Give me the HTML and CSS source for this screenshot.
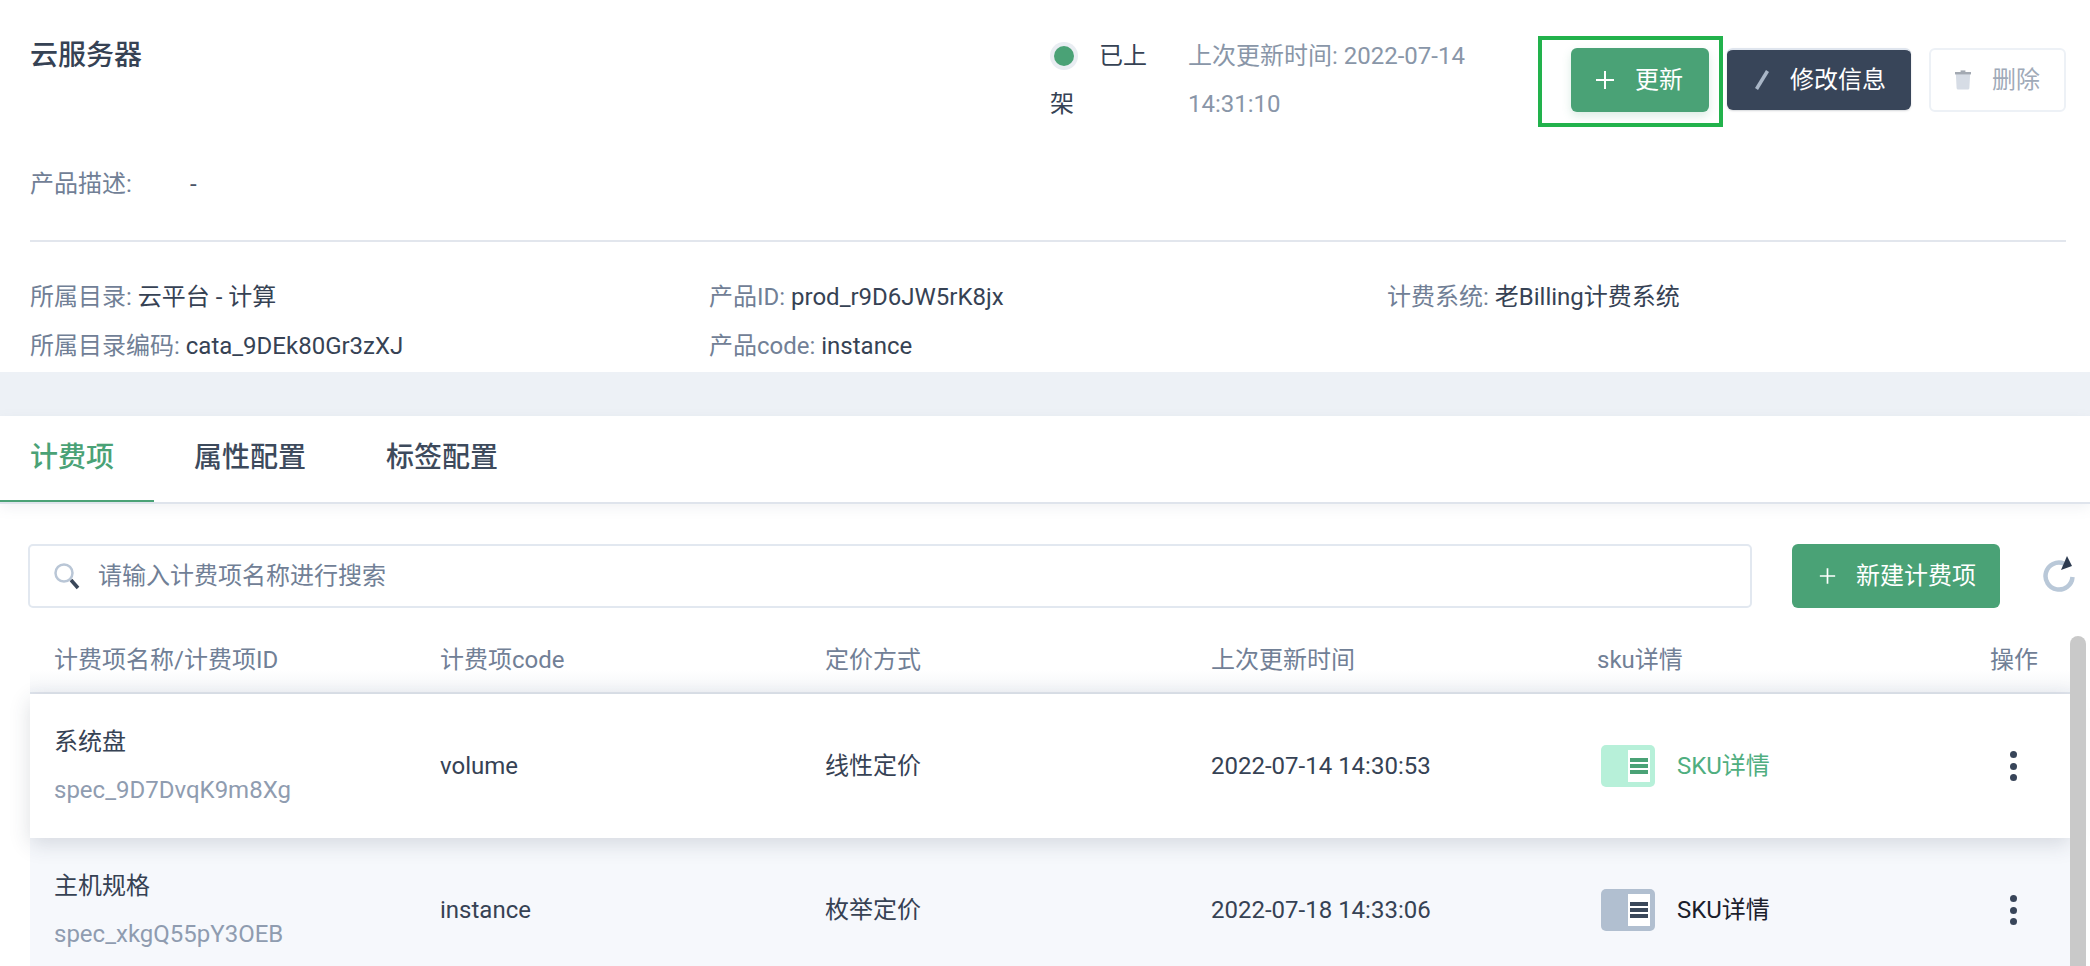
FILE: index.html

```html
<!doctype html>
<html lang="zh-CN">
  <head>
    <meta charset="utf-8">
    <title>云服务器</title>
    <link rel="stylesheet" href="styles.css">
  </head>
  <body>
    <section class="product">
      <div class="product-head">
        <h1 class="product-title">云服务器</h1>
        <div class="status"><span class="status-dot"></span>已上架</div>
        <div class="updated">上次更新时间: 2022-07-14 14:31:10</div>
        <div class="actions">
          <button class="btn btn-green btn-marked">
            <svg class="btn-icon" width="20" height="20" viewBox="0 0 20 20"><path d="M10 1v18M1 10h18" stroke="#fff" stroke-width="2" fill="none"/></svg>
            更新
            <span class="mark"></span>
          </button>
          <button class="btn btn-dark">
            <svg class="btn-icon" width="16" height="20" viewBox="0 0 16 20"><path d="M13.500 1 2.500 19" stroke="#a9b6c7" stroke-width="3.500" fill="none"/></svg>
            修改信息
          </button>
          <button class="btn btn-off">
            <svg class="btn-icon" width="20" height="24" viewBox="0 0 20 24"><path d="M1 3h18l-1 19a2 2 0 0 1-2 2H4a2 2 0 0 1-2-2z" fill="#d6dce5"/><path d="M0 2h20v3H0z" fill="#a3a9b2"/><path d="M7 0h6v2H7z" fill="#a3a9b2"/></svg>
            删除
          </button>
        </div>
      </div>
      <div class="desc"><span class="desc-label">产品描述:</span><span class="desc-value">-</span></div>
      <div class="meta">
        <div><span class="meta-label">所属目录:</span> 云平台 - 计算</div>
        <div><span class="meta-label">产品ID:</span> prod_r9D6JW5rK8jx</div>
        <div><span class="meta-label">计费系统:</span> 老Billing计费系统</div>
        <div><span class="meta-label">所属目录编码:</span> cata_9DEk80Gr3zXJ</div>
        <div><span class="meta-label">产品code:</span> instance</div>
      </div>
    </section>

    <section class="panel">
      <div class="tabs">
        <a class="tab tab-active">计费项</a>
        <a class="tab">属性配置</a>
        <a class="tab">标签配置</a>
      </div>

      <div class="toolbar">
        <div class="search">
          <svg width="28" height="28" viewBox="0 0 28 28"><circle cx="11" cy="11" r="8.500" stroke="#b9c6d6" stroke-width="2.500" fill="none"/><path d="M18 18 25 26" stroke="#3a4759" stroke-width="3.500" fill="none"/></svg>
          <span class="search-text">请输入计费项名称进行搜索</span>
        </div>
        <button class="btn btn-green btn-new">
          <svg class="btn-icon" width="20" height="20" viewBox="0 0 20 20"><path d="M10 1v18M1 10h18" stroke="#fff" stroke-width="2" fill="none"/></svg>
          新建计费项
        </button>
        <svg class="refresh" width="36" height="38" viewBox="0 0 36 38"><path d="M21 7.500A13.500 13.500 0 1 0 29.500 21" stroke="#b9c8d8" stroke-width="4.500" fill="none"/><path d="M24 0 29 10 18 14z" fill="#2d3b50"/></svg>
      </div>

      <div class="table">
        <div class="row row-head">
          <div>计费项名称/计费项ID</div>
          <div>计费项code</div>
          <div>定价方式</div>
          <div>上次更新时间</div>
          <div>sku详情</div>
          <div>操作</div>
        </div>
        <div class="row row-hover">
          <div>
            <div class="item-name">系统盘</div>
            <div class="item-id">spec_9D7DvqK9m8Xg</div>
          </div>
          <div>volume</div>
          <div>线性定价</div>
          <div>2022-07-14 14:30:53</div>
          <div class="sku sku-green">
            <span class="sku-icon"><span class="sku-page"><i></i><i></i><i></i></span></span>SKU详情
          </div>
          <div class="more"><i></i><i></i><i></i></div>
        </div>
        <div class="row row-alt">
          <div>
            <div class="item-name">主机规格</div>
            <div class="item-id">spec_xkgQ55pY3OEB</div>
          </div>
          <div>instance</div>
          <div>枚举定价</div>
          <div>2022-07-18 14:33:06</div>
          <div class="sku">
            <span class="sku-icon"><span class="sku-page"><i></i><i></i><i></i></span></span>SKU详情
          </div>
          <div class="more"><i></i><i></i><i></i></div>
        </div>
      </div>
      <div class="scrollbar"></div>
    </section>
  </body>
</html>
```

FILE: styles.css

```css
* {
    box-sizing: border-box;
}

html, body {
    height: 966px;
    overflow: hidden;
}

body {
    margin: 0;
    background: #edf1f6;
    color: #364254;
    font-family: Roboto, "Noto Sans CJK SC", sans-serif;
    font-size: 24px;
    line-height: 48px;
}

/* top block */
.product {
    height: 372px;
    padding: 32px 24px 0 30px;
    background: #fff;
}

.product-head {
    display: flex;
    height: 96px;
}

.product-title {
    flex: 1;
    margin: 0;
    font-size: 28px;
    font-weight: 500;
}

.status {
    width: 120px;
    margin-right: 18px;
}

.status-dot {
    display: inline-block;
    width: 20px;
    height: 20px;
    margin: 0 25px 0 4px;
    border-radius: 50%;
    background: #4aa276;
    box-shadow: 0 0 0 4px #e9edf2;
    vertical-align: -2px;
}

.updated {
    width: 340px;
    margin-right: 43px;
    color: #8996a8;
}

.actions {
    display: flex;
    gap: 18px;
    align-items: flex-start;
    margin-top: 16px;
}

.btn {
    display: flex;
    align-items: center;
    height: 64px;
    padding: 0 24px;
    border: 0;
    border-radius: 6px;
    font: inherit;
    color: #fff;
    white-space: nowrap;
}

.btn-icon {
    margin-right: 20px;
}

.btn-green {
    background: #4aa276;
    box-shadow: 0 4px 10px rgba(74, 162, 118, 0.2);
}

.btn-marked {
    position: relative;
    width: 138px;
}

.btn-dark {
    width: 184px;
    height: 62px;
    padding-left: 27px;
    background: #384559;
    border-top: 2px solid #dfe5ee;
    box-shadow: 0 1px 2px rgba(45, 55, 72, 0.2);
}

.btn-off {
    width: 137px;
    padding-left: 24px;
    background: #fff;
    border: 2px solid #edf1f6;
    color: #a0aab8;
}

.btn-off .btn-icon {
    margin-right: 21px;
}

/* green frame drawn over the screenshot */
.mark {
    position: absolute;
    top: -12px;
    left: -33px;
    right: -14px;
    bottom: -15px;
    border: 4px solid #22b24c;
}

.desc {
    display: flex;
    margin-top: 32px;
    color: #718096;
}

.desc-label {
    width: 160px;
}

.desc-value {
    color: #4a5568;
}

.meta {
    display: grid;
    grid-template-columns: 679px 678px 1fr;
    grid-auto-rows: 49px;
    margin-top: 32px;
    padding-top: 31px;
    border-top: 2px solid #e2e6ed;
}

.meta-label {
    color: #718096;
}

/* lower block */
.panel {
    position: relative;
    height: 550px;
    margin-top: 44px;
    background: #fff;
}

.tabs {
    display: flex;
    height: 88px;
    border-bottom: 2px solid #dfe4ec;
    box-shadow: 0 4px 12px rgba(113, 128, 150, 0.1);
}

.tab {
    height: 86px;
    padding: 18px 40px 0;
    font-size: 28px;
    font-weight: 500;
    color: #3d4a5c;
}

.tab:first-child {
    padding-left: 30px;
}

.tab-active {
    color: #4aa276;
    border-bottom: 2px solid #4aa276;
}

.toolbar {
    display: flex;
    align-items: flex-start;
    margin-top: 40px;
    padding-left: 28px;
}

.search {
    display: flex;
    align-items: center;
    width: 1724px;
    height: 64px;
    padding-left: 23px;
    border: 2px solid #e2e8f0;
    border-radius: 5px;
    color: #718096;
    line-height: 60px;
}

.search-text {
    margin-left: 17px;
}

.btn-new {
    width: 208px;
    margin-left: 40px;
    padding-left: 27px;
    box-shadow: none;
}

.btn-new .btn-icon {
    margin-right: 20px;
}

.refresh {
    margin: 12px 0 0 43px;
}

.table {
    margin: 16px 20px 0 30px;
}

.row {
    display: grid;
    grid-template-columns: 386px 385px 386px 386px 393px 1fr;
    align-items: center;
    height: 144px;
    padding-left: 24px;
}

.row-head {
    height: 70px;
    padding-top: 4px;
    border-bottom: 2px solid #dfe4ec;
    color: #718096;
    background: linear-gradient(#fff 68%, #f3f5f8);
}

.row-hover {
    position: relative;
    background: #fff;
    box-shadow: 0 6px 20px rgba(45, 55, 72, 0.16);
}

.row-alt {
    background: #f6f8fc;
}

.item-id {
    color: #8f9cb0;
}

.sku {
    display: flex;
    align-items: center;
    color: #1a202c;
}

.sku-green {
    color: #4fae80;
}

.sku-icon {
    display: flex;
    justify-content: flex-end;
    align-items: center;
    width: 54px;
    height: 42px;
    margin: 0 22px 0 4px;
    padding-right: 5px;
    border-radius: 5px;
    background: #b1bfd0;
}

.sku-green .sku-icon {
    background: #b7f0d9;
}

.sku-page {
    display: flex;
    flex-direction: column;
    gap: 2px;
    justify-content: center;
    width: 22px;
    height: 32px;
    padding: 0 2px;
    background: #fff;
}

.sku-page i {
    height: 4px;
    background: #3a4759;
}

.sku-green .sku-page i {
    background: #4aa276;
}

.more {
    display: flex;
    flex-direction: column;
    gap: 4.500px;
    margin-left: 20px;
}

.more i {
    width: 7px;
    height: 7px;
    border-radius: 50%;
    background: #384559;
}

.scrollbar {
    position: absolute;
    top: 220px;
    right: 4px;
    bottom: 0;
    width: 16px;
    border-radius: 8px 8px 0 0;
    background: #c9c9c9;
}
```
